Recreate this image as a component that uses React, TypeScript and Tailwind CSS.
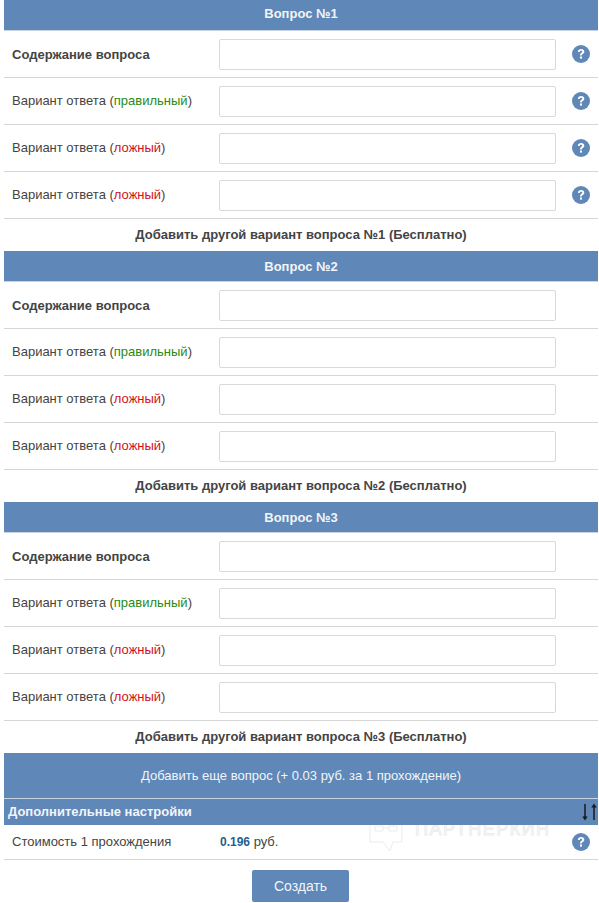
import React from 'react';

const Help = () => (
    <svg width="18" height="18" viewBox="0 0 18 18" className="shrink-0">
        <circle cx="9" cy="9" r="9" fill="#5f87b7" />
        <path d="M5.900 6.900c.1-1.800 1.400-2.800 3.200-2.800 1.900 0 3.200 1.100 3.200 2.600 0 1.100-.5 1.700-1.500 2.300-.8.500-1 .8-1 1.500H8c0-1.400.3-2 1.200-2.600.7-.5 1-.8 1-1.200 0-.6-.5-1-1.200-1-.8 0-1.200.5-1.300 1.200z" fill="#fff" />
        <rect x="8" y="11.500" width="2" height="2.100" fill="#fff" />
    </svg>
);

const Row = ({ children, help, bold }: { children: React.ReactNode; help: boolean; bold?: boolean }) => (
    <div className="flex h-[47px] items-center border-b border-[#d6d6d6]">
        {/* bold label sits a pixel lower in the original */}
        <div className={bold ? 'w-[215px] shrink-0 pl-2 pt-[2px] text-[13px] font-bold text-[#444]' : 'w-[215px] shrink-0 pl-2 text-[13px] text-[#444]'}>
            {children}
        </div>
        <div className="h-[31px] w-[337px] shrink-0 rounded-[2px] border border-[#d9d9d9] bg-white" />
        {help && (
            <div className="ml-4">
                <Help />
            </div>
        )}
    </div>
);

const Block = ({ n, help }: { n: number; help: boolean }) => (
    <div>
        <div className={n === 1
            ? 'flex h-[31px] items-center justify-center border-b border-[#c5d3e3] bg-[#5f87b7] pb-[2px] text-[13px] font-bold text-[#f1f5f9]'
            : 'flex h-[31px] items-center justify-center border-b border-[#c5d3e3] bg-[#5f87b7] pt-px text-[13px] font-bold text-[#f1f5f9]'}>
            Вопрос №{n}
        </div>
        <Row help={help} bold>
            Содержание вопроса
        </Row>
        <Row help={help}>
            Вариант ответа (<span className="text-[#2a8a12]">правильный</span>)
        </Row>
        <Row help={help}>
            Вариант ответа (<span className="text-[#d0111b]">ложный</span>)
        </Row>
        <Row help={help}>
            Вариант ответа (<span className="text-[#d0111b]">ложный</span>)
        </Row>
        <div className="flex h-[32px] items-center justify-center text-[13px] font-bold text-[#444]">
            Добавить другой вариант вопроса №{n} (Бесплатно)
        </div>
    </div>
);

export default function App() {
    return (
        <div className="h-[903px] w-[599px] overflow-hidden bg-white pl-1 pr-px font-['Liberation_Sans',Arial,sans-serif]">
            <Block n={1} help />
            <Block n={2} help={false} />
            <Block n={3} help={false} />

            <div className="flex h-[46px] items-center justify-center border-b border-[#c5d3e3] bg-[#5f87b7] text-[13px] text-[#f1f5f9]">
                Добавить еще вопрос (+ 0.03 руб. за 1 прохождение)
            </div>
            <div className="relative z-10 flex h-[26px] items-center bg-[#5f87b7] pl-1 text-[13px] font-bold text-[#f1f5f9]">
                Дополнительные настройки
                <svg width="18" height="20" viewBox="0 0 18 20" className="absolute right-0 top-[3px]">
                    <path d="M5 2v13" stroke="#1a1a1a" strokeWidth="1.500" />
                    <path d="M2.300 14.500h5.400L5 18.500z" fill="#1a1a1a" />
                    <path d="M14 18V5" stroke="#1a1a1a" strokeWidth="1.500" />
                    <path d="M11.300 5.500h5.400L14 1.500z" fill="#1a1a1a" />
                </svg>
            </div>
            <div className="relative flex h-[35px] items-center border-b border-[#d6d6d6]">
                {/* watermark, slips under the blue bar above */}
                <div className="pointer-events-none absolute left-[365px] top-[-11px] flex items-center gap-3 text-[18px] tracking-[1.500px] text-transparent [-webkit-text-stroke:1px_#ececec]">
                    <svg width="34" height="38" viewBox="0 0 34 38" fill="none" stroke="#ececec" strokeWidth="1">
                        <path d="M1 1h32v27H24l-3 9-7-9H1z" />
                        <path d="M6 12h8v5H6zM20 12h8v5h-8zM14 14h6" />
                    </svg>
                    <span className="-mt-2">ПАРТНЕРКИН</span>
                </div>
                <div className="relative w-[215px] shrink-0 pl-2 text-[13px] text-[#444]">Стоимость 1 прохождения</div>
                <div className="relative pl-px text-[13px] text-[#444]">
                    <span className="text-[12px] font-bold text-[#1f5f8b]">0.196</span> руб.
                </div>
                <div className="relative ml-auto mr-2">
                    <Help />
                </div>
            </div>
            <div className="flex justify-center pr-px pt-[10px]">
                <button className="h-[32px] w-[97px] rounded-[2px] bg-[#5f87b7] text-[14px] text-[#f1f5f9]">Создать</button>
            </div>
        </div>
    );
}
